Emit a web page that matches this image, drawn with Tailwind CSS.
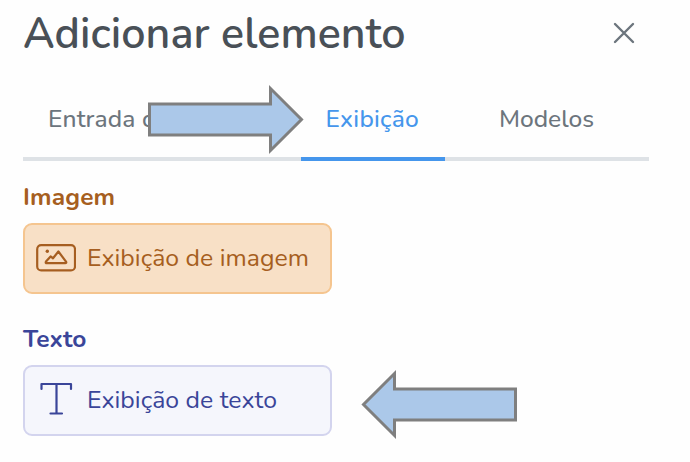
<!DOCTYPE html>
<html lang="pt-BR">
<head>
<meta charset="utf-8">
<title>Adicionar elemento</title>
<script src="https://cdn.jsdelivr.net/npm/@tailwindcss/browser@4"></script>
</head>
<body class="relative h-[462px] w-[690px] overflow-hidden bg-[#fefefe] pl-[23px] pr-[41px] font-['Nunito','Lato',sans-serif] whitespace-nowrap">
<header class="flex h-[66px] items-center justify-between pr-[14px]">
<h1 class="pt-[2px] text-[43px] leading-[66px] font-semibold tracking-[0.07px] text-[#495057]">Adicionar elemento</h1>
<svg class="size-[22px]" viewBox="0 0 22 22" fill="none" stroke="#6c757d" stroke-width="2.4" stroke-linecap="round"><path d="M2 2 20 20M20 2 2 20"/></svg>
</header>
<nav class="flex h-[95px] border-b-4 border-[#dee2e6] pt-[37px] text-[24.5px] leading-[32px] font-medium text-[#6c757d]">
<span class="w-[277.500px] pl-[25px] tracking-[0.15px]">Entrada de</span>
<span class="h-[58px] w-[144px] border-b-4 border-[#4596ec] pl-[25px] tracking-[0.25px] text-[#4596ec]">Exibição</span>
<span class="pl-[54.500px]">Modelos</span>
</nav>
<main>
<section class="h-[142px] pt-5 text-[#a65e20]">
<h2 class="h-[42px] text-[24.5px] leading-[32px] font-bold tracking-[0.15px]">Imagem</h2>
<div class="flex h-[71px] w-[309px] items-center rounded-[9px] border-2 border-[#f5c58f] bg-[#f8e0c6] pl-[11px]">
<svg class="mr-[11px] h-[28px] w-[40px] shrink-0 -translate-y-[1px]" viewBox="0 0 40 28" fill="none" stroke="#a65e20" stroke-width="2.2" stroke-linejoin="round"><rect x="1.200" y="1.200" width="37.800" height="25.200" rx="4"/><path d="M10 17.600 14.600 12.400 17 14.300 22.400 7.500 30 17.600Q30.800 19.200 29.200 19.200H11Q9.100 19.200 10 17.600Z"/><circle cx="11.300" cy="7.200" r="1.700" fill="#a65e20" stroke="none"/></svg>
<span class="pb-[2px] text-[24.8px] leading-[32px] tracking-[0.04px]">Exibição de imagem</span>
</div>
</section>
<section class="h-[142px] pt-5 text-[#3a4599]">
<h2 class="h-[42px] text-[24.5px] leading-[32px] font-bold">Texto</h2>
<div class="flex h-[71px] w-[309px] items-center rounded-[9px] border-2 border-[#d3d4ee] bg-[#f5f6fc] pl-[15px]">
<svg class="mr-[14px] h-[34px] w-[33px] shrink-0 -translate-y-[2px]" viewBox="0 0 33 34" fill="none" stroke="#3a4599" stroke-width="2.200" stroke-linecap="round" stroke-linejoin="round"><path d="M1.500 7V2H31V7M16.500 2V31.500M10.500 31.500H22"/></svg>
<span class="pb-[2px] text-[24.8px] leading-[32px] tracking-[0.04px]">Exibição de texto</span>
</div>
</section>
</main>
<svg class="absolute left-[145px] top-[83px] h-[72px] w-[162px]" viewBox="145 83 162 72" fill="#abc8e9" stroke="#7f7f7f" stroke-width="3"><path d="M149.500 104H270.500V88.500L301.500 119.500 270.500 150.500V135H149.500Z"/></svg>
<svg class="absolute left-[358px] top-[368px] h-[72px] w-[162px]" viewBox="358 368 162 72" fill="#abc8e9" stroke="#7f7f7f" stroke-width="3"><path d="M515.500 389H394.500V373.500L363.500 404.500 394.500 435.500V420H515.500Z"/></svg>
</body>
</html>
